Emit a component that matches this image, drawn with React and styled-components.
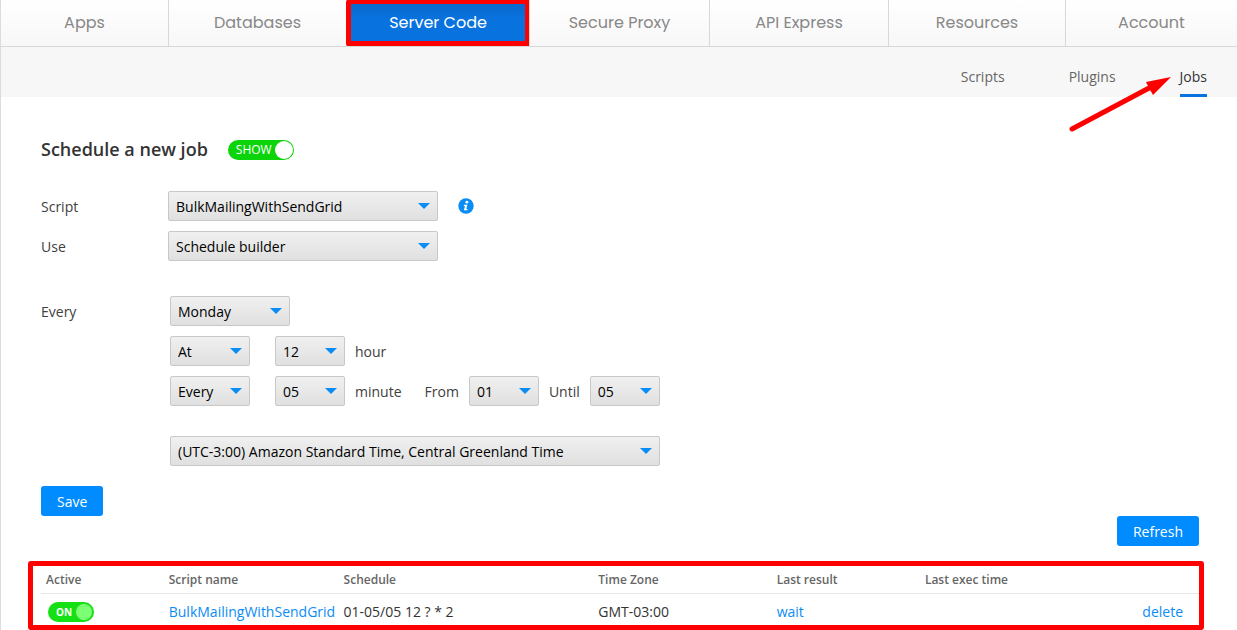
import React, { useState } from "react";

import styled, { createGlobalStyle } from "styled-components";

const tabs = ["Apps", "Databases", "Server Code", "Secure Proxy", "API Express", "Resources", "Account"];
const subTabs = ["Scripts", "Plugins", "Jobs"];

const jobs = [
  {
    script: "BulkMailingWithSendGrid",
    schedule: "01-05/05 12 ? * 2",
    timeZone: "GMT-03:00",
    lastResult: "wait",
    lastExec: "",
  },
];

function Dropdown({ width, value, ...rest }) {
  return (
    <SelectBox $width={width}>
      <Select defaultValue={value} {...rest}>
        <option>{value}</option>
      </Select>
      <Caret viewBox="0 0 12 6" aria-hidden="true">
        <path d="M0 0h12L6 6z" fill="#0a8cf5" />
      </Caret>
    </SelectBox>
  );
}

function App() {
  const [show, setShow] = useState(true);
  const [active, setActive] = useState(true);

  return (
    <Page>
      <GlobalStyle />
      <Nav>
        {tabs.map((tab) => (
          <Tab key={tab} href="#" $active={tab === "Server Code"}>{tab}</Tab>
        ))}
      </Nav>
      <SubNav>
        {subTabs.map((tab) => (
          <SubTab key={tab} href="#" $active={tab === "Jobs"}>
            {tab}
            {tab === "Jobs" && (
              <Pointer viewBox="0 0 102 58" aria-hidden="true">
                <path d="M3 53L82 11" stroke="#f00" strokeWidth="5" strokeLinecap="round" />
                <path d="M102 1L77 6l3 6 4 7z" fill="#f00" />
              </Pointer>
            )}
          </SubTab>
        ))}
      </SubNav>

      <Content>
        <TitleRow>
          <Title>Schedule a new job</Title>
          <ShowSwitch>
            SHOW
            <SwitchInput type="checkbox" checked={show} onChange={() => setShow(!show)} />
            <Knob $size={18} $color="#fff" />
          </ShowSwitch>
        </TitleRow>

        <Field>
          <Label htmlFor="script">Script</Label>
          <Dropdown id="script" width={270} value="BulkMailingWithSendGrid" />
          <InfoButton type="button" aria-label="Script info">
            <svg width="16" height="16" viewBox="0 0 16 16">
              <circle cx="8" cy="8" r="7.7" fill="#0a8cf5" />
              <circle cx="8.9" cy="4.2" r="1.4" fill="#fff" />
              <path d="M6 6.7h3.4L8.3 11h1.2v1.2H5.9L7 7.9H5.8z" fill="#fff" />
            </svg>
          </InfoButton>
        </Field>
        <Field>
          <Label htmlFor="use">Use</Label>
          <Dropdown id="use" width={270} value="Schedule builder" />
        </Field>

        <Builder>
          <Label htmlFor="day">Every</Label>
          <BuilderRows>
            <Row>
              <Dropdown id="day" width={120} value="Monday" />
            </Row>
            <Row>
              <Mode><Dropdown aria-label="Hour mode" width={80} value="At" /></Mode>
              <Dropdown id="hour" width={70} value="12" />
              <UnitLabel htmlFor="hour">hour</UnitLabel>
            </Row>
            <Row>
              <Mode><Dropdown aria-label="Minute mode" width={80} value="Every" /></Mode>
              <Dropdown id="minute" width={70} value="05" />
              <MinuteLabel htmlFor="minute">minute</MinuteLabel>
              <UnitLabel htmlFor="from">From</UnitLabel>
              <Dropdown id="from" width={70} value="01" />
              <UnitLabel htmlFor="until">Until</UnitLabel>
              <Dropdown id="until" width={70} value="05" />
            </Row>
            <ZoneRow>
              <Dropdown
                aria-label="Time zone"
                width={490}
                value="(UTC-3:00) Amazon Standard Time, Central Greenland Time"
              />
            </ZoneRow>
          </BuilderRows>
        </Builder>

        <Button type="button">Save</Button>
        <RefreshRow>
          <Button type="button">Refresh</Button>
        </RefreshRow>

        <JobsFrame>
          <JobsTable>
            <thead>
              <tr>
                <Th $width="10.6%">Active</Th>
                <Th $width="15.1%">Script name</Th>
                <Th $width="22%">Schedule</Th>
                <Th $width="15.4%">Time Zone</Th>
                <Th $width="12.8%">Last result</Th>
                <Th $width="14%">Last exec time</Th>
                <Th aria-label="Actions" />
              </tr>
            </thead>
            <tbody>
              {jobs.map((job) => (
                <tr key={job.script}>
                  <Td>
                    <OnSwitch>
                      ON
                      <SwitchInput type="checkbox" checked={active} onChange={() => setActive(!active)} />
                      <Knob $size={16} $color="#7dff75" />
                    </OnSwitch>
                  </Td>
                  <Td><Link href="#">{job.script}</Link></Td>
                  <Td>{job.schedule}</Td>
                  <Td>{job.timeZone}</Td>
                  <Td><Link href="#">{job.lastResult}</Link></Td>
                  <Td>{job.lastExec}</Td>
                  <Td $right><Link href="#">delete</Link></Td>
                </tr>
              ))}
            </tbody>
          </JobsTable>
        </JobsFrame>
      </Content>
    </Page>
  );
}

const GlobalStyle = createGlobalStyle`
  * {
    box-sizing: border-box;
  }
  body {
    margin: 0;
    background: #fff;
    color: #404040;
    font-family: "Open Sans", "Noto Sans", sans-serif;
    font-size: 14px;
    line-height: 20px;
  }
`;

const Page = styled.div`
  border-left: 1px solid #dcdcdc;
`;

const Nav = styled.nav`
  display: grid;
  grid-template-columns: 167fr 178fr 183fr 180fr 179fr 177fr 172fr;
  height: 47px;
  border-bottom: 1px solid #d8d8d8;
  background: linear-gradient(#fff, #f7f7f7);
`;

const Tab = styled.a`
  position: relative;
  display: flex;
  align-items: center;
  justify-content: center;
  border-left: 1px solid #d8d8d8;
  color: ${props => props.$active ? "#fff" : "#888"};
  background: ${props => props.$active ? "linear-gradient(#0866c8, #0872de 40%)" : "none"};
  font-family: Poppins, Inter, sans-serif;
  font-size: 16px;
  text-decoration: none;
  &:first-child {
    border-left: 0;
  }
  &::after {
    content: "";
    display: ${props => props.$active ? "block" : "none"};
    position: absolute;
    inset: 0 -1px 0 -1px;
    border: 5px solid #f00;
    border-top-width: 4px;
    border-radius: 2px;
  }
`;

const SubNav = styled.nav`
  display: flex;
  justify-content: flex-end;
  gap: 64px;
  height: 50px;
  padding-right: 30px;
  background: #f7f7f7;
`;

const SubTab = styled.a`
  position: relative;
  padding-top: 20px;
  border-bottom: 3px solid ${props => props.$active ? "#0872de" : "transparent"};
  color: ${props => props.$active ? "#333" : "#666"};
  text-decoration: none;
`;

const Pointer = styled.svg`
  position: absolute;
  top: 29px;
  right: 36px;
  width: 102px;
  height: 58px;
`;

const Content = styled.main`
  padding: 40px 38px 0 40px;
`;

const TitleRow = styled.div`
  display: flex;
  align-items: center;
  gap: 20px;
  height: 26px;
  margin-bottom: 28px;
`;

const Title = styled.h1`
  margin: 0;
  padding-bottom: 2px;
  color: #333;
  font-size: 18px;
  font-weight: 600;
  line-height: 24px;
`;

const ShowSwitch = styled.label`
  display: flex;
  align-items: center;
  justify-content: space-between;
  position: relative;
  width: 66px;
  height: 20px;
  padding: 0 1px 0 8px;
  border-radius: 10px;
  background: #0bd40b;
  color: #fff;
  font-size: 12px;
`;

const OnSwitch = styled(ShowSwitch)`
  width: 46px;
  margin-left: 2px;
  padding-right: 2px;
  background: #14e014;
  font-size: 10px;
  font-weight: 700;
`;

const SwitchInput = styled.input`
  appearance: none;
  position: absolute;
  inset: 0;
  margin: 0;
  border-radius: 10px;
  cursor: pointer;
`;

const Knob = styled.span`
  width: ${props => props.$size}px;
  height: ${props => props.$size}px;
  border-radius: 50%;
  background: ${props => props.$color};
`;

const Field = styled.div`
  display: flex;
  align-items: center;
  margin-bottom: 10px;
`;

const Label = styled.label`
  width: 127px;
  height: 30px;
  line-height: 32px;
`;

const SelectBox = styled.div`
  position: relative;
  width: ${props => props.$width}px;
`;

const Select = styled.select`
  appearance: none;
  display: block;
  width: 100%;
  height: 30px;
  padding: 1px 20px 0 7px;
  border: 1px solid #c8c8c8;
  border-radius: 2px;
  background: linear-gradient(#f0f0f0, #e0e0e0);
  color: #000;
  font: inherit;
`;

const Caret = styled.svg`
  position: absolute;
  top: 12px;
  right: 8px;
  width: 12px;
  height: 6px;
  pointer-events: none;
`;

const InfoButton = styled.button`
  display: flex;
  margin-left: 20px;
  padding: 0;
  border: 0;
  background: none;
`;

const Builder = styled.div`
  display: flex;
  margin: 35px 0 20px;
`;

const BuilderRows = styled.div`
  display: flex;
  flex-direction: column;
  gap: 10px;
  margin-left: 2px;
`;

const Row = styled.div`
  display: flex;
  align-items: center;
  gap: 10px;
`;

const ZoneRow = styled(Row)`
  margin-top: 20px;
`;

const Mode = styled.div`
  margin-right: 15px;
`;

const UnitLabel = styled.label`
  height: 30px;
  line-height: 32px;
`;

const MinuteLabel = styled(UnitLabel)`
  margin-right: 13px;
`;

const Button = styled.button`
  display: block;
  height: 30px;
  padding: 1px 16px 0;
  border: 0;
  border-radius: 3px;
  background: #008cff;
  color: #fff;
  font: inherit;
`;

const RefreshRow = styled.div`
  display: flex;
  justify-content: flex-end;
  margin-bottom: 15px;
`;

const JobsFrame = styled.section`
  margin: 0 -5px 0 -13px;
  padding-left: 8px;
  border: 5px solid #f00;
  border-radius: 3px;
`;

const JobsTable = styled.table`
  width: 100%;
  table-layout: fixed;
  border-collapse: separate;
  border-spacing: 0;
`;

const Th = styled.th`
  width: ${props => props.$width || "auto"};
  height: 28px;
  padding: 0 5px;
  border-bottom: 1px solid #e6e6e6;
  color: #666;
  font-size: 12px;
  font-weight: 600;
  text-align: left;
`;

const Td = styled.td`
  height: 31px;
  padding: ${props => props.$right ? "5px 16px 0 5px" : "5px 0 0 5px"};
  color: #333;
  text-align: ${props => props.$right ? "right" : "left"};
  white-space: nowrap;
`;

const Link = styled.a`
  color: #0a8cf5;
  text-decoration: none;
`;

export default App;
